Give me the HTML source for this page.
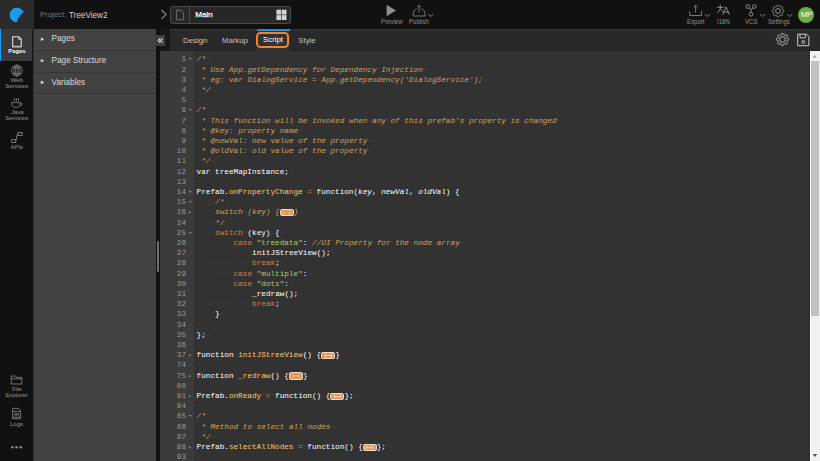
<!DOCTYPE html>
<html><head><meta charset="utf-8">
<style>
*{margin:0;padding:0;box-sizing:border-box}
html,body{width:820px;height:461px;overflow:hidden;background:#111;font-family:"Liberation Sans",sans-serif}
.a{position:absolute}
.t{position:absolute;white-space:nowrap;line-height:1}
svg{position:absolute;overflow:visible}
/* code */
#gut{position:absolute;left:160px;top:51px;width:34.3px;height:410px;background:#3b3b3b}
#code{position:absolute;left:194.3px;top:51px;width:615.7px;height:410px;background:#323232}
.gr,.cr{position:absolute;height:10.2px;line-height:10.2px;font-family:"Liberation Mono",monospace;font-size:7.7px;white-space:pre}
.gr{left:160px;width:26px;text-align:right;color:#999}
.cr{left:196.6px;color:#fff}
.inv{font-style:normal;color:#424242}
.c{color:#d0a061;font-style:italic}
.c .inv{font-style:normal}
.k{color:#d8803a}
.s{color:#afcb68}
.f{color:#FFC66D}
.p{font-style:italic}
.fold{display:inline-block;width:14px;height:7.4px;vertical-align:-2.1px;background:#e39a62;border:0.8px solid #f3dcc8;border-radius:1.8px;position:relative}
.fold:after{content:"";position:absolute;left:2.6px;right:2.6px;top:1.6px;height:2.6px;border-left:1px solid #f8e4d0;border-right:1px solid #f8e4d0;background:linear-gradient(#0000 40%,#f0c8a4 40%,#f0c8a4 70%,#0000 70%)}
.fw{position:absolute;left:28px;top:1.2px}
</style></head><body>
<!-- logo box -->
<div class="a" style="left:0;top:0;width:34px;height:29px;background:#2b2b2b"></div>
<svg style="left:0;top:0" width="34" height="29" viewBox="0 0 34 29">
 <path fill="#1e9cf0" d="M16.6 7.8 C19.6 7.8 22.6 9.6 24.1 12.5 L21.4 13.1 L22 14.1 L19.8 15.6 L20.2 16.5 L17.9 18.3 L17.5 20.6 L16.9 22.1 C12.9 22.1 9.7 18.9 9.7 15 C9.7 11 12.9 7.8 16.6 7.8 Z"/>
 <path fill="none" stroke="#1570b8" stroke-width="0.5" d="M21.6 13.1 Q19.6 11.4 15 11.3 M19.9 15.6 Q18.6 15.1 15.5 15.3" opacity="0.75"/>
</svg>
<!-- topbar text -->
<div class="t" style="left:39.9px;top:11px;font-size:7.8px;color:#7a7a7a">Project:</div>
<div class="t" style="left:68.6px;top:10.8px;font-size:9.3px;transform:scaleX(0.875);transform-origin:0 0;color:#d4d4d4">TreeView2</div>
<svg style="left:160px;top:9px" width="8" height="12" viewBox="0 0 8 12"><path d="M1.5 1 L6 5.6 L1.5 10.2" fill="none" stroke="#8a8a8a" stroke-width="1.1"/></svg>
<div class="a" style="left:170px;top:6.1px;width:120.7px;height:17.6px;background:#272727;border:1px solid #4c4c4c;border-radius:2.5px"></div>
<div class="a" style="left:189px;top:7px;width:1px;height:16px;background:#4c4c4c"></div>
<svg style="left:175px;top:9px" width="10" height="12" viewBox="0 0 10 12"><path d="M1.4 1.3 H6.2 L8.6 3.7 V10.7 H1.4 Z" fill="none" stroke="#8c8c8c" stroke-width="0.7"/></svg>
<div class="t" style="left:195.3px;top:11.1px;font-size:8.1px;color:#fff;-webkit-text-stroke:0.25px #fff">Main</div>
<svg style="left:276px;top:9px" width="11" height="12" viewBox="0 0 11 12"><g fill="#d4d4d4"><rect x="0.4" y="0.7" width="4.7" height="4.85"/><rect x="5.75" y="0.7" width="4.75" height="4.85"/><rect x="0.4" y="6.15" width="4.7" height="4.85"/><rect x="5.75" y="6.15" width="4.75" height="4.85"/></g></svg>
<!-- preview / publish -->
<svg style="left:380px;top:0" width="60" height="29" viewBox="0 0 60 29">
 <path d="M6.6 4.7 L16 10.45 L6.6 16.2 Z" fill="#8f8f8f"/>
 <path d="M39.1 5.4 V12.6 M37.3 7.2 L39.1 5.3 L40.9 7.2" fill="none" stroke="#9a9a9a" stroke-width="0.75"/>
 <path d="M36.8 8.9 C34.3 9.3 33.1 11.6 33.1 16 H45.2 C45.2 11.6 44 9.3 41.4 8.9" fill="none" stroke="#9a9a9a" stroke-width="0.75"/>
 <path d="M48.2 14 L50.7 16.5 L53.2 14" fill="none" stroke="#9a9a9a" stroke-width="0.8"/>
</svg>
<div class="t" style="left:381px;top:18.7px;font-size:6.5px;transform:scaleX(0.93);transform-origin:0 0;color:#929292">Preview</div>
<div class="t" style="left:409.3px;top:18.7px;font-size:6.5px;transform:scaleX(0.93);transform-origin:0 0;color:#929292">Publish</div>
<!-- right icons -->
<svg style="left:680px;top:0" width="140" height="29" viewBox="0 0 140 29">
 <path d="M9.7 11.1 V15.5 H21.5 V11.1" fill="none" stroke="#9a9a9a" stroke-width="0.75"/>
 <path d="M15.6 12.7 V5.3 M13.6 7.3 L15.6 5.2 L17.6 7.3" fill="none" stroke="#9a9a9a" stroke-width="0.75"/>
 <path d="M24.9 14 L27.4 16.6 L29.9 14" fill="none" stroke="#9a9a9a" stroke-width="0.8"/>
 <g fill="none" stroke="#a8a8a8" stroke-width="0.8">
  <path d="M37 7.3 H43.6 M40.3 4.9 V8.2 Q40 11.2 37 12.9 M40.6 8.8 Q41.4 10.6 42.8 11.8"/>
  <path d="M42.6 14.9 L46 6.9 L49.5 14.9 M43.8 12.1 H48.3"/>
 </g>
 <circle cx="67.7" cy="6.5" r="1.85" fill="none" stroke="#9a9a9a" stroke-width="0.85"/>
 <circle cx="74.3" cy="6.5" r="1.85" fill="none" stroke="#9a9a9a" stroke-width="0.85"/>
 <circle cx="71" cy="14.3" r="1.85" fill="none" stroke="#9a9a9a" stroke-width="0.85"/>
 <path d="M68.9 8 L71 9.5 L73.1 8 M71 9.5 V12.45" fill="none" stroke="#9a9a9a" stroke-width="0.85"/>
 <path d="M80 14 L82.5 16.6 L85 14" fill="none" stroke="#9a9a9a" stroke-width="0.8"/>
 <path d="M107.3 14 L109.8 16.6 L112.3 14" fill="none" stroke="#9a9a9a" stroke-width="0.8"/>
</svg>
<svg style="left:0;top:0;width:0;height:0"><defs><path id="gearp" d="M0.00 -6.40 0.63 -6.37 1.11 -5.59 1.45 -4.78 1.91 -4.62 2.36 -4.41 3.17 -4.74 4.06 -4.95 4.53 -4.53 4.95 -4.06 4.74 -3.17 4.41 -2.36 4.62 -1.91 4.78 -1.45 5.59 -1.11 6.37 -0.63 6.40 -0.00 6.37 0.63 5.59 1.11 4.78 1.45 4.62 1.91 4.41 2.36 4.74 3.17 4.95 4.06 4.53 4.53 4.06 4.95 3.17 4.74 2.36 4.41 1.91 4.62 1.45 4.78 1.11 5.59 0.63 6.37 0.00 6.40 -0.63 6.37 -1.11 5.59 -1.45 4.78 -1.91 4.62 -2.36 4.41 -3.17 4.74 -4.06 4.95 -4.53 4.53 -4.95 4.06 -4.74 3.17 -4.41 2.36 -4.62 1.91 -4.78 1.45 -5.59 1.11 -6.37 0.63 -6.40 0.00 -6.37 -0.63 -5.59 -1.11 -4.78 -1.45 -4.62 -1.91 -4.41 -2.36 -4.74 -3.17 -4.95 -4.06 -4.53 -4.53 -4.06 -4.95 -3.17 -4.74 -2.36 -4.41 -1.91 -4.62 -1.45 -4.78 -1.11 -5.59 -0.63 -6.37Z"/></defs></svg>
<svg style="left:771.4px;top:3.6px" width="14" height="14" viewBox="-7 -7 14 14">
 <use href="#gearp" fill="none" stroke="#9a9a9a" stroke-width="0.85" transform="scale(0.93)"/>
 <circle cx="0" cy="0" r="2.45" fill="none" stroke="#9a9a9a" stroke-width="0.9"/>
</svg>
<div class="t" style="left:687.3px;top:18.8px;font-size:6.5px;transform:scaleX(0.93);transform-origin:0 0;color:#929292">Export</div>
<div class="t" style="left:716.7px;top:18.8px;font-size:6.5px;transform:scaleX(0.93);transform-origin:0 0;color:#929292">I18N</div>
<div class="t" style="left:744.8px;top:18.8px;font-size:6.5px;transform:scaleX(0.93);transform-origin:0 0;color:#929292">VCS</div>
<div class="t" style="left:767.8px;top:18.8px;font-size:6.5px;transform:scaleX(0.93);transform-origin:0 0;color:#929292">Settings</div>
<div class="a" style="left:798.1px;top:6.5px;width:16.4px;height:16.4px;border-radius:50%;background:#6aae4c"></div>
<div class="t" style="left:800.8px;top:11.4px;font-size:7.9px;color:#fff;letter-spacing:-0.25px">MP</div>

<!-- left sidebar -->
<div class="a" style="left:0;top:29px;width:32px;height:432px;background:#111"></div>
<div class="a" style="left:0;top:28.8px;width:33.5px;height:32.5px;background:#3a3a3a"></div>
<div class="a" style="left:0;top:28.8px;width:1.35px;height:32.5px;background:#1b9bf2"></div>
<svg style="left:0;top:29px" width="34" height="432" viewBox="0 29 34 432">
 <!-- pages icon -->
 <path d="M12.7 36.8 H18.7 L21.2 39.3 V46.6 H12.7 Z" fill="none" stroke="#e8e8e8" stroke-width="1.05"/>
 <path d="M18.5 36.9 V39.5 H21.1" fill="none" stroke="#d0d0d0" stroke-width="0.7"/>
 <path d="M12.9 46.5 H21" stroke="#bdbdbd" stroke-width="1.5"/>
 <!-- globe -->
 <g fill="none" stroke="#8a8a8a" stroke-width="0.8">
  <circle cx="16.8" cy="70.6" r="5.4"/>
  <ellipse cx="16.8" cy="70.6" rx="2.9" ry="5.4"/>
  <ellipse cx="16.8" cy="70.6" rx="1.1" ry="5.4"/>
  <path d="M12.6 67.8 H21 M12.6 73.4 H21"/>
 </g>
 <!-- cup -->
 <g fill="none" stroke="#8a8a8a" stroke-width="0.8">
  <path d="M11.6 102.6 H20.4 C20.4 105.6 19 107.5 16 107.5 C13 107.5 11.6 105.6 11.6 102.6 Z"/>
  <path d="M20.3 103.2 C22.6 103.2 22.6 105.6 19.9 105.6"/>
  <path d="M14.25 98 V101.4 M16.4 98 V101.4 M18.5 98 V101.4"/>
 </g>
 <!-- apis -->
 <g fill="none" stroke="#8a8a8a" stroke-width="0.8">
  <rect x="11.7" y="139.4" width="3.7" height="3.1"/>
  <rect x="18.2" y="132.5" width="3.9" height="3.1"/>
  <path d="M15.4 141 Q16.6 141 16.6 139.8 V135.2 Q16.6 134 18.2 134"/>
 </g>
 <!-- folder -->
 <g fill="none" stroke="#8a8a8a" stroke-width="0.8">
  <path d="M11.2 376 H15.4 L16.6 377.4 H21.8 V384 H11.2 Z"/>
  <path d="M11.2 378.8 H21.8"/>
 </g>
 <!-- logs -->
 <g fill="none" stroke="#8a8a8a" stroke-width="0.8">
  <path d="M12.6 408.4 H18.4 L20.6 410.6 V418.7 H12.6 Z"/>
  <path d="M12.8 411.4 H20.4 M12.8 417.2 H20.4"/>
  <path d="M14.2 413.7 H19.2 M14.2 415 H19.2"/>
 </g>
 <g fill="#8a8a8a">
  <circle cx="12.3" cy="447.3" r="1.3"/><circle cx="16.5" cy="447.3" r="1.3"/><circle cx="20.7" cy="447.3" r="1.3"/>
 </g>
</svg>
<div class="t" style="left:8.3px;top:49.1px;font-size:5.8px;font-weight:bold;color:#fafafa">Pages</div>
<div class="t" style="left:10.8px;top:77.3px;font-size:6px;color:#959595">Web</div>
<div class="t" style="left:5.2px;top:83.4px;font-size:6px;color:#959595">Services</div>
<div class="t" style="left:11px;top:109.1px;font-size:6px;color:#959595">Java</div>
<div class="t" style="left:5.2px;top:115.2px;font-size:6px;color:#959595">Services</div>
<div class="t" style="left:10.4px;top:143.9px;font-size:6px;color:#959595">APIs</div>
<div class="t" style="left:11.9px;top:385.6px;font-size:6px;color:#959595">File</div>
<div class="t" style="left:5.5px;top:392.1px;font-size:6px;color:#959595">Explorer</div>
<div class="t" style="left:10px;top:421.3px;font-size:6px;color:#959595">Logs</div>

<!-- panel -->
<div class="a" style="left:32px;top:29px;width:124px;height:432px;background:#424242"></div>
<div class="a" style="left:32px;top:29px;width:2.2px;height:432px;background:linear-gradient(90deg,#0c0c0c,#3a3a3a)"></div>
<div class="a" style="left:34px;top:50.2px;width:122px;height:0.8px;background:#373737"></div>
<div class="a" style="left:34px;top:72px;width:122px;height:0.8px;background:#373737"></div>
<div class="a" style="left:34px;top:93.3px;width:122px;height:0.8px;background:#373737"></div>
<svg style="left:34px;top:29px" width="20" height="70" viewBox="34 29 20 70">
 <path d="M40.8 37.4 L44.4 39.2 L40.8 41 Z" fill="#d8d8d8"/>
 <path d="M40.8 59 L44.4 60.8 L40.8 62.6 Z" fill="#d8d8d8"/>
 <path d="M40.8 80.6 L44.4 82.4 L40.8 84.2 Z" fill="#d8d8d8"/>
</svg>
<div class="t" style="left:51.6px;top:35.3px;font-size:8.2px;color:#dcdcdc">Pages</div>
<div class="t" style="left:51.6px;top:56.9px;font-size:8.2px;color:#dcdcdc">Page Structure</div>
<div class="t" style="left:51.6px;top:78.5px;font-size:8.2px;color:#dcdcdc">Variables</div>

<!-- strip + collapse button -->
<div class="a" style="left:156px;top:29px;width:4px;height:432px;background:#111"></div>
<div class="a" style="left:160px;top:29px;width:10px;height:22px;background:#181818"></div>
<div class="a" style="left:156.6px;top:241.2px;width:2.8px;height:30.6px;border-radius:1.4px;background:linear-gradient(90deg,#5a5a5a,#858585,#5a5a5a)"></div>
<div class="a" style="left:156px;top:35px;width:9px;height:11px;background:#3e3e3e"></div>
<svg style="left:156px;top:35px" width="9" height="11" viewBox="0 0 9 11"><path d="M4.2 3.4 L2.2 5.5 L4.2 7.6 M6.6 3.4 L4.6 5.5 L6.6 7.6" fill="none" stroke="#e8e8e8" stroke-width="1.05"/></svg>

<!-- tab bar -->
<div class="a" style="left:170px;top:29px;width:650px;height:22px;background:#292929"></div>
<div class="a" style="left:170px;top:28.7px;width:650px;height:1px;background:#363636"></div>
<div class="a" style="left:170px;top:49.9px;width:650px;height:1.1px;background:#222"></div>
<div class="a" style="left:256.8px;top:29px;width:33.2px;height:22px;background:#323232"></div>
<div class="a" style="left:256.8px;top:29px;width:33.2px;height:2px;background:#2a8ede"></div>
<div class="a" style="left:256.1px;top:31.8px;width:32.9px;height:15.8px;border:2px solid #f08526;border-radius:4.5px"></div>
<div class="t" style="left:183.1px;top:36.5px;font-size:7.8px;color:#c4c4c4">Design</div>
<div class="t" style="left:221.9px;top:36.5px;font-size:7.8px;color:#c4c4c4">Markup</div>
<div class="t" style="left:263.1px;top:36.3px;font-size:7.8px;color:#fff">Script</div>
<div class="t" style="left:298.3px;top:36.5px;font-size:7.8px;color:#c4c4c4">Style</div>
<svg style="left:774.8px;top:31.8px" width="15" height="15" viewBox="-7.5 -7.5 15 15">
 <use href="#gearp" fill="none" stroke="#c8c8c8" stroke-width="0.9" transform="scale(0.96)"/>
 <circle cx="0" cy="0" r="2.9" fill="none" stroke="#c8c8c8" stroke-width="0.9"/>
</svg>
<svg style="left:796px;top:33px" width="15" height="15" viewBox="0 0 15 15">
 <path d="M1.7 1.2 H10.6 L12.9 3.5 V12.7 H1.7 Z" fill="none" stroke="#cfcfcf" stroke-width="1"/>
 <path d="M4 1.3 V4.8 H9.4 V1.3" fill="none" stroke="#cfcfcf" stroke-width="0.9"/>
 <circle cx="7.3" cy="9" r="1.5" fill="none" stroke="#cfcfcf" stroke-width="0.9"/>
</svg>

<!-- editor -->
<div id="gut"></div>
<div id="code"></div>
<div class="gr" style="top:54.30px"><span class="gn">1</span><svg class="fw" width="6" height="6" viewBox="0 0 6 6"><path d="M0.6 3.1 H3.8 L2.2 4.8 Z" fill="#8c8c8c"/></svg></div>
<div class="gr" style="top:64.50px"><span class="gn">2</span></div>
<div class="gr" style="top:74.70px"><span class="gn">3</span></div>
<div class="gr" style="top:84.90px"><span class="gn">4</span></div>
<div class="gr" style="top:95.10px"><span class="gn">5</span></div>
<div class="gr" style="top:105.30px"><span class="gn">6</span><svg class="fw" width="6" height="6" viewBox="0 0 6 6"><path d="M0.6 3.1 H3.8 L2.2 4.8 Z" fill="#8c8c8c"/></svg></div>
<div class="gr" style="top:115.50px"><span class="gn">7</span></div>
<div class="gr" style="top:125.70px"><span class="gn">8</span></div>
<div class="gr" style="top:135.90px"><span class="gn">9</span></div>
<div class="gr" style="top:146.10px"><span class="gn">10</span></div>
<div class="gr" style="top:156.30px"><span class="gn">11</span></div>
<div class="gr" style="top:166.50px"><span class="gn">12</span></div>
<div class="gr" style="top:176.70px"><span class="gn">13</span></div>
<div class="gr" style="top:186.90px"><span class="gn">14</span><svg class="fw" width="6" height="6" viewBox="0 0 6 6"><path d="M0.6 3.1 H3.8 L2.2 4.8 Z" fill="#8c8c8c"/></svg></div>
<div class="gr" style="top:197.10px"><span class="gn">15</span><svg class="fw" width="6" height="6" viewBox="0 0 6 6"><path d="M0.6 3.1 H3.8 L2.2 4.8 Z" fill="#8c8c8c"/></svg></div>
<div class="gr" style="top:207.30px"><span class="gn">16</span><svg class="fw" width="6" height="6" viewBox="0 0 6 6"><path d="M1 2.9 L3.2 4.2 L1 5.5 Z" fill="#8c8c8c"/></svg></div>
<div class="gr" style="top:217.50px"><span class="gn">24</span></div>
<div class="gr" style="top:227.70px"><span class="gn">25</span><svg class="fw" width="6" height="6" viewBox="0 0 6 6"><path d="M0.6 3.1 H3.8 L2.2 4.8 Z" fill="#8c8c8c"/></svg></div>
<div class="gr" style="top:237.90px"><span class="gn">26</span></div>
<div class="gr" style="top:248.10px"><span class="gn">27</span></div>
<div class="gr" style="top:258.30px"><span class="gn">28</span></div>
<div class="gr" style="top:268.50px"><span class="gn">29</span></div>
<div class="gr" style="top:278.70px"><span class="gn">30</span></div>
<div class="gr" style="top:288.90px"><span class="gn">31</span></div>
<div class="gr" style="top:299.10px"><span class="gn">32</span></div>
<div class="gr" style="top:309.30px"><span class="gn">33</span></div>
<div class="gr" style="top:319.50px"><span class="gn">34</span></div>
<div class="gr" style="top:329.70px"><span class="gn">35</span></div>
<div class="gr" style="top:339.90px"><span class="gn">36</span></div>
<div class="gr" style="top:350.10px"><span class="gn">37</span><svg class="fw" width="6" height="6" viewBox="0 0 6 6"><path d="M1 2.9 L3.2 4.2 L1 5.5 Z" fill="#8c8c8c"/></svg></div>
<div class="gr" style="top:360.30px"><span class="gn">74</span></div>
<div class="gr" style="top:370.50px"><span class="gn">75</span><svg class="fw" width="6" height="6" viewBox="0 0 6 6"><path d="M1 2.9 L3.2 4.2 L1 5.5 Z" fill="#8c8c8c"/></svg></div>
<div class="gr" style="top:380.70px"><span class="gn">80</span></div>
<div class="gr" style="top:390.90px"><span class="gn">81</span><svg class="fw" width="6" height="6" viewBox="0 0 6 6"><path d="M1 2.9 L3.2 4.2 L1 5.5 Z" fill="#8c8c8c"/></svg></div>
<div class="gr" style="top:401.10px"><span class="gn">84</span></div>
<div class="gr" style="top:411.30px"><span class="gn">85</span><svg class="fw" width="6" height="6" viewBox="0 0 6 6"><path d="M0.6 3.1 H3.8 L2.2 4.8 Z" fill="#8c8c8c"/></svg></div>
<div class="gr" style="top:421.50px"><span class="gn">86</span></div>
<div class="gr" style="top:431.70px"><span class="gn">87</span></div>
<div class="gr" style="top:441.90px"><span class="gn">88</span><svg class="fw" width="6" height="6" viewBox="0 0 6 6"><path d="M1 2.9 L3.2 4.2 L1 5.5 Z" fill="#8c8c8c"/></svg></div>
<div class="gr" style="top:452.10px"><span class="gn">93</span></div>
<div class="cr" style="top:54.30px"><span class="c">/*</span><i class="inv">¬</i></div>
<div class="cr" style="top:64.50px"><span class="c"><i class="inv">·</i>*<i class="inv">·</i>Use<i class="inv">·</i>App.getDependency<i class="inv">·</i>for<i class="inv">·</i>Dependency<i class="inv">·</i>Injection</span><i class="inv">¬</i></div>
<div class="cr" style="top:74.70px"><span class="c"><i class="inv">·</i>*<i class="inv">·</i>eg:<i class="inv">·</i>var<i class="inv">·</i>DialogService<i class="inv">·</i>=<i class="inv">·</i>App.getDependency(&#x27;DialogService&#x27;);</span><i class="inv">¬</i></div>
<div class="cr" style="top:84.90px"><span class="c"><i class="inv">·</i>*/</span><i class="inv">¬</i></div>
<div class="cr" style="top:95.10px"><i class="inv">¬</i></div>
<div class="cr" style="top:105.30px"><span class="c">/*</span><i class="inv">¬</i></div>
<div class="cr" style="top:115.50px"><span class="c"><i class="inv">·</i>*<i class="inv">·</i>This<i class="inv">·</i>function<i class="inv">·</i>will<i class="inv">·</i>be<i class="inv">·</i>invoked<i class="inv">·</i>when<i class="inv">·</i>any<i class="inv">·</i>of<i class="inv">·</i>this<i class="inv">·</i>prefab&#x27;s<i class="inv">·</i>property<i class="inv">·</i>is<i class="inv">·</i>changed</span><i class="inv">¬</i></div>
<div class="cr" style="top:125.70px"><span class="c"><i class="inv">·</i>*<i class="inv">·</i>@key:<i class="inv">·</i>property<i class="inv">·</i>name</span><i class="inv">¬</i></div>
<div class="cr" style="top:135.90px"><span class="c"><i class="inv">·</i>*<i class="inv">·</i>@newVal:<i class="inv">·</i>new<i class="inv">·</i>value<i class="inv">·</i>of<i class="inv">·</i>the<i class="inv">·</i>property</span><i class="inv">¬</i></div>
<div class="cr" style="top:146.10px"><span class="c"><i class="inv">·</i>*<i class="inv">·</i>@oldVal:<i class="inv">·</i>old<i class="inv">·</i>value<i class="inv">·</i>of<i class="inv">·</i>the<i class="inv">·</i>property</span><i class="inv">¬</i></div>
<div class="cr" style="top:156.30px"><span class="c"><i class="inv">·</i>*/</span><i class="inv">¬</i></div>
<div class="cr" style="top:166.50px">var<i class="inv">·</i>treeMapInstance;<i class="inv">¬</i></div>
<div class="cr" style="top:176.70px"><i class="inv">¬</i></div>
<div class="cr" style="top:186.90px">Prefab.<span class="f">onPropertyChange</span><i class="inv">·</i><span class="k">=</span><i class="inv">·</i>function(<span class="p">key</span>,<i class="inv">·</i><span class="p">newVal</span>,<i class="inv">·</i><span class="p">oldVal</span>)<i class="inv">·</i>{<i class="inv">¬</i></div>
<div class="cr" style="top:197.10px"><i class="inv">·</i><i class="inv">·</i><i class="inv">·</i><i class="inv">·</i><span class="c">/*</span><i class="inv">¬</i></div>
<div class="cr" style="top:207.30px"><i class="inv">·</i><i class="inv">·</i><i class="inv">·</i><i class="inv">·</i><span class="c">switch<i class="inv">·</i>(key)<i class="inv">·</i>{</span><span class="fold"></span><span class="c">}</span><i class="inv">¬</i></div>
<div class="cr" style="top:217.50px"><i class="inv">·</i><i class="inv">·</i><i class="inv">·</i><i class="inv">·</i><span class="c">*/</span><i class="inv">¬</i></div>
<div class="cr" style="top:227.70px"><i class="inv">·</i><i class="inv">·</i><i class="inv">·</i><i class="inv">·</i><span class="k">switch</span><i class="inv">·</i>(key)<i class="inv">·</i>{<i class="inv">¬</i></div>
<div class="cr" style="top:237.90px"><i class="inv">·</i><i class="inv">·</i><i class="inv">·</i><i class="inv">·</i><i class="inv">·</i><i class="inv">·</i><i class="inv">·</i><i class="inv">·</i><span class="k">case</span><i class="inv">·</i><span class="s">&quot;treedata&quot;</span>:<i class="inv">·</i><span class="c">//UI<i class="inv">·</i>Property<i class="inv">·</i>for<i class="inv">·</i>the<i class="inv">·</i>node<i class="inv">·</i>array</span><i class="inv">¬</i></div>
<div class="cr" style="top:248.10px"><i class="inv">·</i><i class="inv">·</i><i class="inv">·</i><i class="inv">·</i><i class="inv">·</i><i class="inv">·</i><i class="inv">·</i><i class="inv">·</i><i class="inv">·</i><i class="inv">·</i><i class="inv">·</i><i class="inv">·</i>initJStreeView();<i class="inv">¬</i></div>
<div class="cr" style="top:258.30px"><i class="inv">·</i><i class="inv">·</i><i class="inv">·</i><i class="inv">·</i><i class="inv">·</i><i class="inv">·</i><i class="inv">·</i><i class="inv">·</i><i class="inv">·</i><i class="inv">·</i><i class="inv">·</i><i class="inv">·</i><span class="k">break</span>;<i class="inv">¬</i></div>
<div class="cr" style="top:268.50px"><i class="inv">·</i><i class="inv">·</i><i class="inv">·</i><i class="inv">·</i><i class="inv">·</i><i class="inv">·</i><i class="inv">·</i><i class="inv">·</i><span class="k">case</span><i class="inv">·</i><span class="s">&quot;multiple&quot;</span>:<i class="inv">¬</i></div>
<div class="cr" style="top:278.70px"><i class="inv">·</i><i class="inv">·</i><i class="inv">·</i><i class="inv">·</i><i class="inv">·</i><i class="inv">·</i><i class="inv">·</i><i class="inv">·</i><span class="k">case</span><i class="inv">·</i><span class="s">&quot;dots&quot;</span>:<i class="inv">¬</i></div>
<div class="cr" style="top:288.90px"><i class="inv">·</i><i class="inv">·</i><i class="inv">·</i><i class="inv">·</i><i class="inv">·</i><i class="inv">·</i><i class="inv">·</i><i class="inv">·</i><i class="inv">·</i><i class="inv">·</i><i class="inv">·</i><i class="inv">·</i>_redraw();<i class="inv">¬</i></div>
<div class="cr" style="top:299.10px"><i class="inv">·</i><i class="inv">·</i><i class="inv">·</i><i class="inv">·</i><i class="inv">·</i><i class="inv">·</i><i class="inv">·</i><i class="inv">·</i><i class="inv">·</i><i class="inv">·</i><i class="inv">·</i><i class="inv">·</i><span class="k">break</span>;<i class="inv">¬</i></div>
<div class="cr" style="top:309.30px"><i class="inv">·</i><i class="inv">·</i><i class="inv">·</i><i class="inv">·</i>}<i class="inv">¬</i></div>
<div class="cr" style="top:319.50px"><i class="inv">¬</i></div>
<div class="cr" style="top:329.70px">};<i class="inv">¬</i></div>
<div class="cr" style="top:339.90px"><i class="inv">¬</i></div>
<div class="cr" style="top:350.10px">function<i class="inv">·</i><span class="f">initJStreeView</span>()<i class="inv">·</i>{<span class="fold"></span>}<i class="inv">¬</i></div>
<div class="cr" style="top:360.30px"><i class="inv">¬</i></div>
<div class="cr" style="top:370.50px">function<i class="inv">·</i><span class="f">_redraw</span>()<i class="inv">·</i>{<span class="fold"></span>}<i class="inv">¬</i></div>
<div class="cr" style="top:380.70px"><i class="inv">¬</i></div>
<div class="cr" style="top:390.90px">Prefab.<span class="f">onReady</span><i class="inv">·</i><span class="k">=</span><i class="inv">·</i>function()<i class="inv">·</i>{<span class="fold"></span>};<i class="inv">¬</i></div>
<div class="cr" style="top:401.10px"><i class="inv">¬</i></div>
<div class="cr" style="top:411.30px"><span class="c">/*</span><i class="inv">¬</i></div>
<div class="cr" style="top:421.50px"><span class="c"><i class="inv">·</i>*<i class="inv">·</i>Method<i class="inv">·</i>to<i class="inv">·</i>select<i class="inv">·</i>all<i class="inv">·</i>nodes</span><i class="inv">¬</i></div>
<div class="cr" style="top:431.70px"><span class="c"><i class="inv">·</i>*/</span><i class="inv">¬</i></div>
<div class="cr" style="top:441.90px">Prefab.<span class="f">selectAllNodes</span><i class="inv">·</i><span class="k">=</span><i class="inv">·</i>function()<i class="inv">·</i>{<span class="fold"></span>};<i class="inv">¬</i></div>
<div class="cr" style="top:452.10px"><i class="inv">¬</i></div>

<!-- scrollbar -->
<div class="a" style="left:807.8px;top:51px;width:2.2px;height:410px;background:#2f2f2f"></div>
<div class="a" style="left:809.8px;top:51px;width:10.2px;height:410px;background:#f1f1f1;border-left:1px solid #fff"></div>
<div class="a" style="left:811px;top:61px;width:8px;height:254.6px;background:#c1c1c1"></div>
<svg style="left:810px;top:51px" width="10" height="410" viewBox="810 51 10 410">
 <path d="M812.7 57.7 L814.65 54.8 L816.6 57.7 Z" fill="#a3a3a3"/>
 <path d="M812.8 453.9 L815 457.1 L817.2 453.9 Z" fill="#505050"/>
</svg>
</body></html>
